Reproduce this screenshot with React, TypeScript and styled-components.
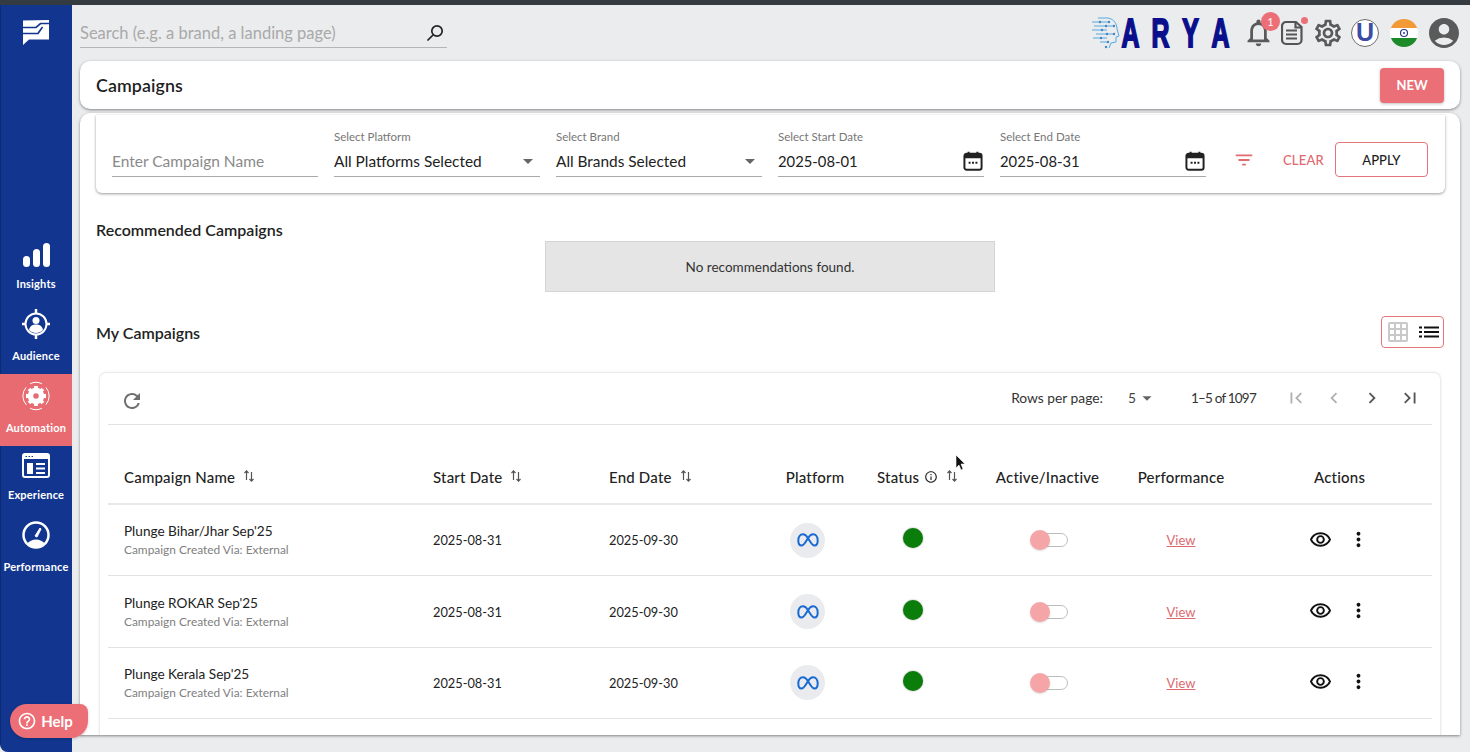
import React from 'react';
import styled, { createGlobalStyle } from 'styled-components';
import {
  MdOutlineNotifications, MdOutlineSettings, MdAccountCircle, MdFilterList, MdRefresh,
  MdFirstPage, MdLastPage, MdChevronLeft, MdChevronRight, MdOutlineRemoveRedEye, MdMoreVert,
  MdInfoOutline, MdHelpOutline, MdArrowDropDown, MdGridOn,
} from 'react-icons/md';

const Global = createGlobalStyle`
  html, body { margin: 0; height: 100%; overflow: hidden; background: #ebecee; }
  body { font-family: "Lato", "Liberation Sans", sans-serif; color: #1c1c1c; }
  * { box-sizing: border-box; }
`;

const Page = styled.div`
  position: relative; height: 100vh; display: flex; flex-direction: column; background: #ebecee;
`;
const TopStrip = styled.div`height: 5px; background: #343c41; flex: none;`;
const Body = styled.div`flex: 1; display: flex; min-height: 0;`;

const Sidebar = styled.aside`
  width: 72px; flex: none; background: #12368f; border-left: 1px solid #0d2a75;
  border-radius: 0 0 0 8px; display: flex; flex-direction: column;
`;
const LogoBox = styled.div`height: 225px; padding: 15px 0 0 22px;`;
const NavItem = styled.div<{ $active?: boolean; $top: number; $gap: number; $h: number }>`
  height: ${p => p.$h}px; margin-left: -1px; padding-top: ${p => p.$top}px; display: flex; flex-direction: column;
  align-items: center; gap: ${p => p.$gap}px; color: #fff;
  background: ${p => (p.$active ? '#e96b72' : 'transparent')};
`;
const NavIcon = styled.div`height: 32px; display: flex; align-items: center; justify-content: center;`;
const NavLabel = styled.span`font-size: 11px; font-weight: 700; line-height: 14px; letter-spacing: 0.2px; white-space: nowrap;`;

const Main = styled.main`flex: 1; min-width: 0; padding: 0 10px 17px 8px; display: flex; flex-direction: column;`;
const Header = styled.header`height: 56px; flex: none; display: flex; align-items: flex-start; justify-content: space-between;`;
const Search = styled.div`
  width: 367px; height: 28px; margin-top: 15px; border-bottom: 1px solid #b5b5b5; display: flex;
  align-items: center; justify-content: space-between; padding: 0 3px 2px 0;
`;
const SearchHint = styled.span`font-size: 16.5px; color: #a9a9a9;`;
const HeaderRight = styled.div`display: flex; align-items: center; height: 55px; margin-right: -2px; color: #5a5a5a;`;
const Arya = styled.div`display: flex; align-items: center; margin-right: 13px;`;
const AryaLetters = styled.div`display: flex; gap: 13px; margin-left: 2px;`;
const AryaLetter = styled.span`
  width: 17px; height: 30px; display: flex; align-items: center; justify-content: center;
  font: 700 40px/30px "Liberation Sans", sans-serif; color: #0a0f8c; transform: scaleX(0.62);
  -webkit-text-stroke: 2px #0a0f8c;
`;
const IconWrap = styled.div<{ $ml?: number }>`
  position: relative; display: flex; align-items: center; justify-content: center; margin-left: ${p => p.$ml ?? 0}px;
`;
const CountBadge = styled.span`
  position: absolute; top: -4px; right: -5px; width: 19px; height: 19px; border-radius: 50%; background: #ec6e76;
  color: #fff; font-size: 11px; display: flex; align-items: center; justify-content: center;
`;
const Dot = styled.span`position: absolute; top: -3px; right: -5px; width: 7px; height: 7px; border-radius: 50%; background: #ec6e76;`;
const Brand = styled.div`
  width: 28px; height: 28px; border-radius: 50%; border: 1px solid #6d6d6d; background: #fff; display: flex;
  align-items: center; justify-content: center; color: #3c4da5; font: 700 25px/1 "Liberation Sans", sans-serif;
`;

const TitleCard = styled.section`
  height: 48px; flex: none; background: #fff; border-radius: 10px; box-shadow: 0 1px 3px rgba(0,0,0,.45);
  display: flex; align-items: center; justify-content: space-between; padding: 0 16px; margin-bottom: 4px;
`;
const PageTitle = styled.h1`margin: 0; font-size: 17.8px; font-weight: 600; color: #1f1f1f; letter-spacing: .1px;`;
const NewButton = styled.button`
  width: 64px; height: 35px; border: 0; border-radius: 4px; background: #ea6f76; color: #fff; font: 700 13px "Lato", sans-serif;
  box-shadow: 0 1px 3px rgba(0,0,0,.25);
`;

const ContentCard = styled.section`
  flex: 1; min-height: 0; background: #fff; border-radius: 10px 10px 0 0; padding: 2px 15px 0 16px; overflow: hidden;
  box-shadow: 0 1px 3px rgba(0,0,0,.45);
`;
const FilterCard = styled.div`
  height: 78px; background: #fff; border-radius: 0 0 6px 6px; box-shadow: 0 1px 3px rgba(0,0,0,.4); display: flex;
  align-items: flex-start; padding: 0 0 0 16px;
`;
const Field = styled.div`
  width: 206px; flex: none; margin-right: 16px; height: 62px; display: flex; flex-direction: column; justify-content: flex-end;
`;
const FieldLabel = styled.label`font-size: 11.5px; color: #777; line-height: 14px; margin-bottom: 7px;`;
const FieldValue = styled.div<{ $placeholder?: boolean; $size?: number }>`
  height: 26px; border-bottom: 1px solid #aaa; display: flex; align-items: center; justify-content: space-between;
  font-size: ${p => p.$size ?? 15.4}px; color: ${p => (p.$placeholder ? '#8a8a8a' : '#222')};
  padding-bottom: ${p => (p.$placeholder ? 6 : 5)}px;
`;
const FilterTools = styled.div`display: flex; flex: none; align-items: center; height: 35px; margin: 27px 0 0 11px; color: #e46a72;`;
const ClearText = styled.span`font-size: 13px; font-weight: 500; margin-left: 28px; color: #df6870; letter-spacing: .2px;`;
const ApplyButton = styled.button`
  width: 93px; height: 35px; margin-left: 11px; border: 1px solid #e2747b; border-radius: 4px; background: #fff;
  font: 500 13px "Lato", sans-serif; color: #1c1c1c;
`;
const SectionTitle = styled.h2`margin: 0; font-size: 16px; font-weight: 600; color: #222; line-height: 20px;`;
const Recommended = styled.div`padding-top: 27px;`;
const EmptyBox = styled.div`
  width: 450px; height: 51px; margin: 1px 0 0 449px; background: #e4e5e4; border: 1px solid #d4d4d4; display: flex;
  align-items: center; justify-content: center; font-size: 13.5px; color: #333;
`;
const SectionRow = styled.div`
  height: 32px; margin-top: 24px; display: flex; align-items: center; justify-content: space-between; padding-right: 1px;
  ${SectionTitle} { padding-top: 2px; }
`;
const ViewToggle = styled.div`
  width: 63px; height: 32px; border: 1px solid #e2747b; border-radius: 4px; display: flex; align-items: center;
  gap: 7px; padding: 0 0 0 4px; background: #fff;
`;
const TableCard = styled.div`
  min-height: 400px; margin: 25px 5px 0 4px; padding: 0 8px; background: #fff; border-radius: 6px 6px 0 0; box-shadow: 0 0 3px rgba(0,0,0,.22);
`;
const Toolbar = styled.div`
  height: 52px; border-bottom: 1px solid #e2e2e2; display: flex; align-items: center; justify-content: space-between;
  color: #6f6f6f; padding: 0 11px 2px 12px;
`;
const RefreshWrap = styled.div`display: flex; margin-top: 6px;`;
const Pager = styled.div`display: flex; align-items: center; font-size: 13.8px; color: #333;`;
const PerPage = styled.div`display: flex; align-items: center; margin-left: 25px; width: 63px; color: #444;`;
const PageRange = styled.span`width: 94px; font-size: 13.5px; letter-spacing: -.8px;`;
const PagerButtons = styled.div`display: flex; align-items: center; gap: 16px;`;

const GridRow = styled.div<{ $head?: boolean }>`
  display: grid; grid-template-columns: 309px 176px 176px 92px 104px 165px 102px 200px;
  align-items: center;
  height: ${p => (p.$head ? 80 : 71.4)}px; border-bottom: ${p => (p.$head ? 2 : 1)}px solid ${p => (p.$head ? '#e8e8e8' : '#e2e2e2')};
  ${p => p.$head && 'padding-top: 26px;'}
`;
const HeadCell = styled.div<{ $center?: boolean; $pad?: number }>`
  display: flex; align-items: center; font-size: 15px; font-weight: 500; color: #222; white-space: nowrap; letter-spacing: .2px;
  justify-content: ${p => (p.$center ? 'center' : 'flex-start')}; padding-left: ${p => p.$pad ?? 0}px;
`;
const NameCell = styled.div`padding-left: 16px; display: flex; flex-direction: column; gap: 3px;`;
const RowName = styled.span`font-size: 13.6px; color: #222; line-height: 16px;`;
const RowSub = styled.span`font-size: 11.9px; color: #808080; line-height: 15px;`;
const DateCell = styled.div`font-size: 12.8px; color: #222; padding-left: 16px;`;
const MetaCircle = styled.div`
  width: 35px; height: 35px; margin-left: 21px; border-radius: 50%; background: #e9ebee; display: flex; align-items: center; justify-content: center;
`;
const StatusCell = styled.div`display: flex; justify-content: center; margin-top: -4px;`;
const StatusDot = styled.span`width: 20px; height: 20px; border-radius: 50%; background: #0a7d0a; box-shadow: 0 0 2px rgba(0,0,0,.4);`;
const ToggleCell = styled.div`display: flex; justify-content: center;`;
const ToggleTrack = styled.div`
  position: relative; width: 28px; height: 14px; margin-left: 12px; border: 1px solid #bdbdbd; border-radius: 7px; background: #fff;
`;
const ToggleKnob = styled.span`
  position: absolute; left: -11px; top: -4px; width: 20px; height: 20px; border-radius: 50%; background: #f5a5a5;
  box-shadow: 0 1px 2px rgba(0,0,0,.15);
`;
const ViewCell = styled.div`text-align: center; margin-top: -3px;`;
const ViewLink = styled.a`font-size: 13px; color: #dc6a70; text-decoration: underline;`;
const ActionsCell = styled.div`display: flex; align-items: center; padding-left: 77px; gap: 15px; color: #111; margin-top: -2px;`;

const Help = styled.button`
  position: absolute; left: 10px; top: 704px; width: 78px; height: 34px; border: 0; border-radius: 17px 8px 17px 17px;
  background: #ec6f77; color: #fff; font: 700 15px "Lato", sans-serif; display: flex; align-items: center; justify-content: center; gap: 4px;
  box-shadow: 0 1px 3px rgba(0,0,0,.2); padding: 0 8px 0 0;
`;
const Cursor = styled.svg`position: absolute; left: 955px; top: 454px;`;

const Sort = () => (
  <svg width="12" height="14" viewBox="0 0 12 14" style={{ marginLeft: 8, marginTop: -3, flex: 'none' }} fill="none" stroke="#555" strokeWidth="1.2">
    <path d="M3.5 11V2M1.5 4l2-2.2 2 2.2M8.5 3v9.500M6.500 10l2 2.200 2-2.200" />
  </svg>
);
const Calendar = () => (
  <svg width="22" height="22" viewBox="0 0 20 20" fill="none" style={{ flex: 'none' }}>
    <rect x="2.200" y="3.500" width="15.600" height="14.500" rx="2" stroke="#222" strokeWidth="1.800" />
    <rect x="2.200" y="3.500" width="15.600" height="4" fill="#222" />
    <path d="M6 1.500v3M14 1.500v3" stroke="#222" strokeWidth="1.800" />
    <path d="M6 11.500h1.800M9.100 11.500h1.800M12.200 11.500h1.800" stroke="#222" strokeWidth="1.800" />
  </svg>
);
const MetaIcon = () => (
  <svg width="22" height="14" viewBox="0 0 22 14" fill="none" stroke="#1769d3" strokeWidth="2">
    <path d="M11 5C9 2 7.500 1.200 6 1.200 3 1.200 1.300 4 1.300 7.500c0 3 1.300 5 3.200 5 2.500 0 4-3.500 6.500-7.500 2-3 3.500-3.800 5-3.800 3 0 4.700 2.800 4.700 6.300 0 3-1.300 5-3.200 5-2.500 0-4-3.500-6.500-7.500" />
  </svg>
);

const rows = ["Plunge Bihar/Jhar Sep'25", "Plunge ROKAR Sep'25", "Plunge Kerala Sep'25"];

export default function App() {
  return (
    <Page>
      <Global />
      <TopStrip />
      <Body>
        <Sidebar>
          <LogoBox>
            <svg width="26" height="25" viewBox="0 0 26 25">
              <path d="M0 0.500 26 0v19.500H6L0 25z" fill="#fff" />
              <path d="M0 7.500H13L17.500 3.500H26M0 13.500H15L19.500 7" fill="none" stroke="#12368f" strokeWidth="1.700" />
            </svg>
          </LogoBox>
          <NavItem $top={9} $gap={6} $h={72}>
            <NavIcon>
              <svg width="28" height="24" viewBox="0 0 28 24" fill="#fff">
                <rect x="1" y="13" width="7" height="11" rx="3.500" /><rect x="11" y="6" width="7" height="18" rx="3.500" /><rect x="21" y="0" width="7" height="24" rx="3.500" />
              </svg>
            </NavIcon>
            <NavLabel>Insights</NavLabel>
          </NavItem>
          <NavItem $top={6} $gap={9} $h={72}>
            <NavIcon>
              <svg width="28" height="30" viewBox="0 0 28 30" fill="none" stroke="#fff" strokeWidth="2">
                <circle cx="14" cy="15" r="10.500" />
                <path d="M14 0v5M14 25v5M0 15h4M24 15h4" strokeWidth="2.500" />
                <circle cx="14" cy="11.500" r="3.500" fill="#fff" stroke="none" />
                <path d="M7 21c1-4.500 4-5.500 7-5.500s6 1 7 5.500c-2 1.800-4.500 3-7 3s-5-1.200-7-3z" fill="#fff" stroke="none" />
              </svg>
            </NavIcon>
            <NavLabel>Audience</NavLabel>
          </NavItem>
          <NavItem $active $top={6} $gap={9} $h={72}>
            <NavIcon>
              <svg width="30" height="30" viewBox="0 0 30 30" fill="none" stroke="#fff">
                <path d="M5.500 24A13 13 0 0 1 5 6.500M9 2.800A13 13 0 0 1 21 2.800M25 6.500a13 13 0 0 1 0 17M21 27.200a13 13 0 0 1-12 0" strokeWidth="1" />
                <circle cx="15" cy="15" r="5.500" strokeWidth="5.500" />
                <path d="M15 5v4M15 21v4M5 15h4M21 15h4M8 8l3 3M19 19l3 3M22 8l-3 3M11 19l-3 3" strokeWidth="3.800" />
              </svg>
            </NavIcon>
            <NavLabel>Automation</NavLabel>
          </NavItem>
          <NavItem $top={3} $gap={7} $h={67}>
            <NavIcon>
              <svg width="28" height="25" viewBox="0 0 28 25" fill="none">
                <rect x="1" y="1" width="26" height="23" rx="2" stroke="#fff" strokeWidth="2" />
                <rect x="1" y="1" width="26" height="5" fill="#fff" />
                <path d="M3.500 3.500h1.500M6.500 3.500h1.500M9.500 3.500h1.500" stroke="#12368f" strokeWidth="1.200" />
                <rect x="5" y="10" width="6" height="11" fill="#fff" />
                <path d="M14 11h9M14 15.500h9M14 20h9" stroke="#fff" strokeWidth="2" />
              </svg>
            </NavIcon>
            <NavLabel>Experience</NavLabel>
          </NavItem>
          <NavItem $top={6} $gap={9} $h={72}>
            <NavIcon>
              <svg width="28" height="28" viewBox="0 0 28 28" fill="none">
                <circle cx="14" cy="14" r="12.500" stroke="#fff" strokeWidth="2.500" />
                <path d="M5 23c2-3 5.500-4.500 9-4.500s7 1.500 9 4.500c-2.500 2.500-5.500 4-9 4s-6.500-1.500-9-4z" fill="#fff" />
                <path d="M13 15l5-8 1 1-4 8z" fill="#fff" stroke="#fff" />
              </svg>
            </NavIcon>
            <NavLabel>Performance</NavLabel>
          </NavItem>
        </Sidebar>
        <Main>
          <Header>
            <Search>
              <SearchHint>Search (e.g. a brand, a landing page)</SearchHint>
              <svg width="18" height="18" viewBox="0 0 18 18" fill="none" stroke="#222" strokeWidth="1.700">
                <circle cx="11" cy="7" r="5.200" /><path d="M7 11l-5.500 5.500" />
              </svg>
            </Search>
            <HeaderRight>
              <Arya>
                <svg width="28" height="32" viewBox="0 0 28 32" fill="none" stroke="#55a9e0" strokeWidth="1">
                  <path d="M6 1h10c6 1 9 6 9 11l2 7-3 1v5l-5 1-2 5M0 5h17M2 9h20M0 13h15M4 17h18M1 21h14M8 25h8" />
                  <g fill="#3f86c6" stroke="none">
                    <circle cx="8" cy="5" r="1.200" /><circle cx="17" cy="5" r="1.200" /><circle cx="14" cy="9" r="1.200" /><circle cx="22" cy="9" r="1.200" />
                    <circle cx="10" cy="13" r="1.200" /><circle cx="15" cy="17" r="1.200" /><circle cx="22" cy="17" r="1.200" /><circle cx="9" cy="21" r="1.200" /><circle cx="16" cy="25" r="1.200" /><circle cx="14" cy="30" r="1.200" />
                  </g>
                </svg>
                <AryaLetters>
                  {['A', 'R', 'Y', 'A'].map((l, i) => <AryaLetter key={i}>{l}</AryaLetter>)}
                </AryaLetters>
              </Arya>
              <IconWrap>
                <MdOutlineNotifications size={33} />
                <CountBadge>1</CountBadge>
              </IconWrap>
              <IconWrap $ml={6}>
                <svg width="22" height="26" viewBox="0 0 22 25" fill="none" stroke="#555" strokeWidth="2.200">
                  <path d="M5 1.500h10l5.500 5v13a4 4 0 0 1-4 4H5a4 4 0 0 1-4-4v-14a4 4 0 0 1 4-4z" />
                  <path d="M14.500 2v5h5.500M5 10h11M5 14h11M5 18h11" />
                </svg>
                <Dot />
              </IconWrap>
              <IconWrap $ml={9}>
                <MdOutlineSettings size={32} />
              </IconWrap>
              <IconWrap $ml={7}><Brand>U</Brand></IconWrap>
              <IconWrap $ml={11}>
                <svg width="28" height="28" viewBox="0 0 28 28">
                  <defs><clipPath id="flag"><circle cx="14" cy="14" r="14" /></clipPath></defs>
                  <g clipPath="url(#flag)">
                    <rect width="28" height="10" fill="#f29a38" /><rect y="9" width="28" height="10" fill="#fff" /><rect y="19" width="28" height="9" fill="#1d8a2a" />
                    <circle cx="14" cy="14" r="3.500" fill="none" stroke="#2a3a8c" strokeWidth="1.200" />
                    <circle cx="14" cy="14" r="1" fill="#2a3a8c" />
                  </g>
                </svg>
              </IconWrap>
              <IconWrap $ml={8}><MdAccountCircle size={36} /></IconWrap>
            </HeaderRight>
          </Header>
          <TitleCard>
            <PageTitle>Campaigns</PageTitle>
            <NewButton>NEW</NewButton>
          </TitleCard>
          <ContentCard>
            <FilterCard>
              <Field><FieldValue $placeholder $size={15.5}>Enter Campaign Name</FieldValue></Field>
              <Field><FieldLabel>Select Platform</FieldLabel><FieldValue>All Platforms Selected<MdArrowDropDown size={24} color="#666" /></FieldValue></Field>
              <Field><FieldLabel>Select Brand</FieldLabel><FieldValue>All Brands Selected<MdArrowDropDown size={24} color="#666" /></FieldValue></Field>
              <Field><FieldLabel>Select Start Date</FieldLabel><FieldValue $size={14.8}>2025-08-01<Calendar /></FieldValue></Field>
              <Field><FieldLabel>Select End Date</FieldLabel><FieldValue $size={14.8}>2025-08-31<Calendar /></FieldValue></Field>
              <FilterTools>
                <MdFilterList size={22} />
                <ClearText>CLEAR</ClearText>
                <ApplyButton>APPLY</ApplyButton>
              </FilterTools>
            </FilterCard>
            <Recommended>
              <SectionTitle>Recommended Campaigns</SectionTitle>
              <EmptyBox>No recommendations found.</EmptyBox>
            </Recommended>
            <SectionRow>
              <SectionTitle>My Campaigns</SectionTitle>
              <ViewToggle>
                <MdGridOn size={24} color="#c9c9c9" />
                <svg width="20" height="12" viewBox="0 0 20 12" fill="#111" style={{ marginLeft: 2 }}>
                  <rect x="0" y="0.500" width="3" height="2" /><rect x="5" y="0.500" width="15" height="2" />
                  <rect x="0" y="5" width="3" height="2" /><rect x="5" y="5" width="15" height="2" />
                  <rect x="0" y="9.500" width="3" height="2" /><rect x="5" y="9.500" width="15" height="2" />
                </svg>
              </ViewToggle>
            </SectionRow>
            <TableCard>
              <Toolbar>
                <RefreshWrap><MdRefresh size={24} /></RefreshWrap>
                <Pager>
                  Rows per page:
                  <PerPage>5<MdArrowDropDown size={22} color="#666" /></PerPage>
                  <PageRange>1–5 of 1097</PageRange>
                  <PagerButtons>
                    <MdFirstPage size={22} color="#b0b0b0" />
                    <MdChevronLeft size={22} color="#b0b0b0" />
                    <MdChevronRight size={22} color="#555" />
                    <MdLastPage size={22} color="#555" />
                  </PagerButtons>
                </Pager>
              </Toolbar>
              <GridRow $head>
                <HeadCell $pad={16}>Campaign Name<Sort /></HeadCell>
                <HeadCell $pad={16}>Start Date<Sort /></HeadCell>
                <HeadCell $pad={16}>End Date<Sort /></HeadCell>
                <HeadCell $center>Platform</HeadCell>
                <HeadCell $pad={16}>Status<MdInfoOutline size={14} style={{ marginLeft: 5, flex: 'none' }} /><Sort /></HeadCell>
                <HeadCell $center>Active/Inactive</HeadCell>
                <HeadCell $center>Performance</HeadCell>
                <HeadCell $pad={82}>Actions</HeadCell>
              </GridRow>
              {rows.map(name => (
                <GridRow key={name}>
                  <NameCell>
                    <RowName>{name}</RowName>
                    <RowSub>Campaign Created Via: External</RowSub>
                  </NameCell>
                  <DateCell>2025-08-31</DateCell>
                  <DateCell>2025-09-30</DateCell>
                  <MetaCircle><MetaIcon /></MetaCircle>
                  <StatusCell><StatusDot /></StatusCell>
                  <ToggleCell><ToggleTrack><ToggleKnob /></ToggleTrack></ToggleCell>
                  <ViewCell><ViewLink>View</ViewLink></ViewCell>
                  <ActionsCell>
                    <MdOutlineRemoveRedEye size={23} />
                    <MdMoreVert size={23} />
                  </ActionsCell>
                </GridRow>
              ))}
            </TableCard>
          </ContentCard>
        </Main>
      </Body>
      <Help><MdHelpOutline size={20} />Help</Help>
      <Cursor width="12" height="18" viewBox="0 0 12 18">
        <path d="M1 1v13l3-3 2 5 2-1-2-5h4z" fill="#111" stroke="#fff" strokeWidth=".6" />
      </Cursor>
    </Page>
  );
}
